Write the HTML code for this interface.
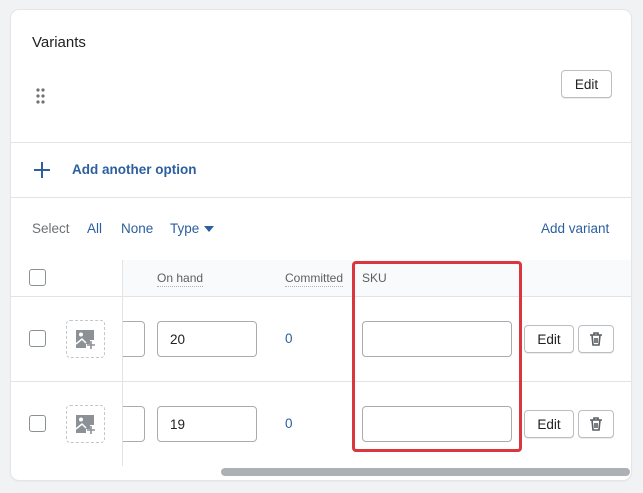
<!DOCTYPE html>
<html><head><meta charset="utf-8"><style>
*{box-sizing:border-box;margin:0;padding:0}
body{width:643px;height:493px;background:#f1f2f4;font-family:"Liberation Sans",sans-serif;position:relative;overflow:hidden;color:#202223}
.a{position:absolute}
.card{left:11px;top:10px;width:620px;height:470px;background:#fff;border-radius:8px;box-shadow:0 0 0 1px #e4e5e7,0 1px 2px rgba(0,0,0,.08);overflow:hidden}
.hr{height:1px;background:#e1e3e5}
.blue{color:#2c5f9e}
.btn{border:1px solid #babfc3;border-radius:4px;background:#fff;font-size:13.5px;display:flex;align-items:center;justify-content:center;box-shadow:0 1px 0 rgba(0,0,0,.08)}
.cb{width:17px;height:17px;border:1.5px solid #8c9196;border-radius:3px;background:#fff}
.inp{border:1px solid #a8acb0;border-radius:4px;background:#fff;font-size:13.5px;padding-left:12px;display:flex;align-items:center}
.ph{width:39px;height:38px;border:1.5px dashed #c4c7ca;border-radius:4px}
.t{font-size:13.5px;white-space:nowrap}
.th{font-size:12px;color:#5c5f62;white-space:nowrap}
</style></head><body>
<div class="a card"></div>
<div class="a t" style="left:32px;top:34px;font-size:15px;color:#202223">Variants</div>
<svg class="a" style="left:36px;top:88px" width="10" height="16"><g fill="#6d7175"><circle cx="2" cy="2" r="1.6"/><circle cx="7" cy="2" r="1.6"/><circle cx="2" cy="8" r="1.6"/><circle cx="7" cy="8" r="1.6"/><circle cx="2" cy="14" r="1.6"/><circle cx="7" cy="14" r="1.6"/></g></svg>
<div class="a btn" style="left:561px;top:70px;width:51px;height:28px">Edit</div>
<div class="a hr" style="left:11px;top:142px;width:620px"></div>
<svg class="a" style="left:34px;top:162px" width="16" height="16"><path d="M8 0v16M0 8h16" stroke="#2c5f9e" stroke-width="2"/></svg>
<div class="a t blue" style="left:72px;top:162px;font-weight:bold;font-size:13.5px">Add another option</div>
<div class="a hr" style="left:11px;top:197px;width:620px"></div>
<div class="a t" style="left:32px;top:221px;color:#6d7175;font-size:13.5px">Select</div>
<div class="a t blue" style="left:87px;top:221px">All</div>
<div class="a t blue" style="left:121px;top:221px">None</div>
<div class="a t blue" style="left:170px;top:221px">Type</div>
<svg class="a" style="left:204px;top:226px" width="10" height="7"><path d="M0 0h10L5 6z" fill="#2c5f9e"/></svg>
<div class="a t blue" style="left:541px;top:221px">Add variant</div>
<div class="a" style="left:122px;top:260px;width:509px;height:36px;background:#f9fafb"></div>
<div class="a hr" style="left:11px;top:296px;width:620px"></div>
<div class="a hr" style="left:11px;top:381px;width:620px"></div>
<div class="a" style="left:122px;top:260px;width:1px;height:206px;background:#e1e3e5"></div>
<div class="a cb" style="left:29px;top:269px"></div>
<div class="a th" style="left:157px;top:271px;border-bottom:1px dotted #b0b3b6;padding-bottom:1px">On hand</div>
<div class="a th" style="left:285px;top:271px;border-bottom:1px dotted #b0b3b6;padding-bottom:1px">Committed</div>
<div class="a th" style="left:362px;top:271px">SKU</div>

<div class="a cb" style="left:29px;top:330px"></div>
<div class="a ph" style="left:66px;top:320px"></div>
<svg class="a" style="left:76px;top:330px" width="20" height="19"><path d="M0 0h18v10h-4v4h-4v4H0z" fill="#8c9196"/><circle cx="5" cy="4.5" r="2" fill="#fff"/><path d="M0 14l6-5 4 4" stroke="#fff" stroke-width="1.5" fill="none"/><path d="M15 11v8M11 15h8" stroke="#8c9196" stroke-width="1.6"/></svg>
<div class="a inp" style="left:123px;top:321px;width:22px;height:36px;border-left:none;border-radius:0 4px 4px 0"></div>
<div class="a inp" style="left:157px;top:321px;width:100px;height:36px">20</div>
<div class="a t blue" style="left:285px;top:331px">0</div>
<div class="a inp" style="left:362px;top:321px;width:150px;height:36px"></div>
<div class="a btn" style="left:524px;top:325px;width:50px;height:28px">Edit</div>
<div class="a btn" style="left:578px;top:325px;width:36px;height:28px"><svg width="14" height="14"><path d="M1 3h12M5 3V1h4v2M3 3l1 10h6l1-10M6 6v5M8 6v5" stroke="#5c5f62" stroke-width="1.6" fill="none"/></svg></div>

<div class="a cb" style="left:29px;top:415px"></div>
<div class="a ph" style="left:66px;top:405px"></div>
<svg class="a" style="left:76px;top:415px" width="20" height="19"><path d="M0 0h18v10h-4v4h-4v4H0z" fill="#8c9196"/><circle cx="5" cy="4.5" r="2" fill="#fff"/><path d="M0 14l6-5 4 4" stroke="#fff" stroke-width="1.5" fill="none"/><path d="M15 11v8M11 15h8" stroke="#8c9196" stroke-width="1.6"/></svg>
<div class="a inp" style="left:123px;top:406px;width:22px;height:36px;border-left:none;border-radius:0 4px 4px 0"></div>
<div class="a inp" style="left:157px;top:406px;width:100px;height:36px">19</div>
<div class="a t blue" style="left:285px;top:416px">0</div>
<div class="a inp" style="left:362px;top:406px;width:150px;height:36px"></div>
<div class="a btn" style="left:524px;top:410px;width:50px;height:28px">Edit</div>
<div class="a btn" style="left:578px;top:410px;width:36px;height:28px"><svg width="14" height="14"><path d="M1 3h12M5 3V1h4v2M3 3l1 10h6l1-10M6 6v5M8 6v5" stroke="#5c5f62" stroke-width="1.6" fill="none"/></svg></div>

<div class="a" style="left:352px;top:261px;width:170px;height:191px;border:3px solid #d9363e;border-radius:4px"></div>
<div class="a" style="left:221px;top:468px;width:409px;height:8px;border-radius:4px;background:#adb0b4"></div>
</body></html>
